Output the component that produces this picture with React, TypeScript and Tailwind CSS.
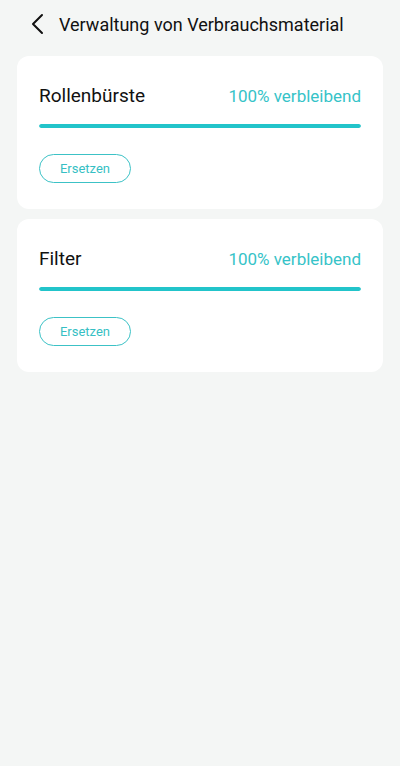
const items = [
  { name: "Rollenbürste", percent: 100 },
  { name: "Filter", percent: 100 },
];

function ConsumableCard({ name, percent }: { name: string; percent: number }) {
  return (
    <div className="rounded-[12px] bg-white px-[22px] pb-[26px] pt-[28px]">
      <div className="flex h-6 items-center justify-between">
        <span className="text-[19px] leading-6 text-[#111]">{name}</span>
        <span className="text-[17px] leading-6 text-[#36c3c8]">{percent}% verbleibend</span>
      </div>
      <div className="mt-4 h-1 w-full overflow-hidden rounded-full bg-[#e3f6f7]">
        <div className="h-full rounded-full bg-[#22c4ca]" style={{ width: `${percent}%` }} />
      </div>
      <button
        type="button"
        className="mt-[26px] flex h-[29px] w-[92px] items-center justify-center rounded-full border border-[#3cc2c6] text-[13px] text-[#36bfc4]"
      >
        Ersetzen
      </button>
    </div>
  );
}

export default function App() {
  return (
    <div
      className="min-h-[766px] w-full bg-[#f4f6f5]"
      style={{ fontFamily: "Roboto, 'Noto Sans', sans-serif" }}
    >
      <div className="flex h-[48px] items-center pl-[30px]">
        <svg width="16" height="24" viewBox="0 0 16 24" fill="none" className="mr-[13px]">
          <polyline points="12,3 3,12 12,21" stroke="#111" strokeWidth="2" strokeLinecap="round" strokeLinejoin="round" />
        </svg>
        <h1 className="text-[18px] text-[#111]">Verwaltung von Verbrauchsmaterial</h1>
      </div>
      <div className="flex flex-col gap-[10px] px-[17px] pt-[8px]">
        {items.map((it) => (
          <ConsumableCard key={it.name} name={it.name} percent={it.percent} />
        ))}
      </div>
    </div>
  );
}
